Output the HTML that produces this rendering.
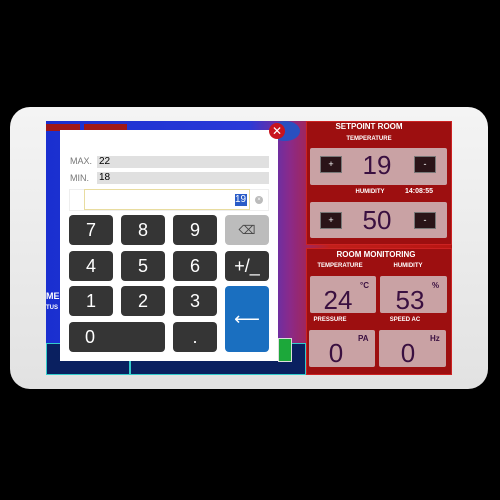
<!DOCTYPE html>
<html><head><style>
*{margin:0;padding:0;box-sizing:border-box}
body{width:500px;height:500px;background:#000;position:relative;overflow:hidden;font-family:"Liberation Sans",sans-serif}
.a{position:absolute}
.frame{left:10px;top:107px;width:478px;height:282px;background:linear-gradient(#f4f4f4,#e2e2e2);border-radius:20px}
.scr{left:46px;top:121px;width:406px;height:254px;background:linear-gradient(90deg,#1a2fd0 0%,#2a3ad8 50%,#8a2a8a 60%,#c0201a 70%,#b81512 100%);overflow:hidden}
.rp{background:#9d0f10;border:1px solid #c22}
.lbl{color:#fff;font-weight:bold;font-size:6px;text-align:center}
.box{background:#c9a2a4;border-radius:2px}
.big{color:#3a1040;font-size:26px;text-align:center}
.pm{width:22px;height:17px;background:#2a1418;border:1px solid #777;color:#fff;font-size:9px;text-align:center;line-height:15px}
.k{background:#353535;border-radius:4px;color:#fff;font-size:18px;text-align:center;line-height:30px}
.bar{background:#e0e0e0}
</style></head><body>
<div class="a frame"></div>
<div class="a scr">
 <div class="a" style="left:0;top:3px;width:34px;height:7px;background:#a01818"></div>
 <div class="a" style="left:38px;top:3px;width:43px;height:7px;background:#a01818"></div>
 <div class="a" style="left:0;top:170px;width:20px;height:30px;color:#fff;font-weight:bold;font-size:9px">ME<br><span style="font-size:6px">TUS</span></div>
 <div class="a" style="left:0;top:222px;width:84px;height:32px;background:#0a2060;border:1px solid #3cc"></div>
 <div class="a" style="left:84px;top:222px;width:176px;height:32px;background:#0a2060;border:1px solid #3cc"></div>
 <div class="a" style="left:232px;top:217px;width:14px;height:24px;background:#1ca83a;border:1px solid #ddd"></div>
 <div class="a" style="left:224px;top:0;width:30px;height:20px;border-radius:50%;background:#2a50c0"></div>
</div>
<div class="a rp" style="left:306px;top:121px;width:146px;height:124px"></div>
<div class="a rp" style="left:306px;top:248px;width:146px;height:127px"></div>
<div class="a lbl" style="left:306px;top:122px;width:126px;font-size:8px">SETPOINT ROOM</div>
<div class="a lbl" style="left:306px;top:136px;width:126px">TEMPERATURE</div>
<div class="a box" style="left:310px;top:148px;width:137px;height:37px"></div>
<div class="a pm" style="left:320px;top:156px">+</div>
<div class="a big" style="left:355px;top:150px;width:44px">19</div>
<div class="a pm" style="left:414px;top:156px">-</div>
<div class="a lbl" style="left:355px;top:189px;width:30px">HUMIDITY</div>
<div class="a lbl" style="left:399px;top:188px;width:40px;font-size:7px">14:08:55</div>
<div class="a box" style="left:310px;top:202px;width:137px;height:36px"></div>
<div class="a pm" style="left:320px;top:212px">+</div>
<div class="a big" style="left:355px;top:205px;width:44px">50</div>
<div class="a pm" style="left:414px;top:212px">-</div>
<div class="a lbl" style="left:306px;top:250px;width:140px;font-size:8px">ROOM MONITORING</div>
<div class="a lbl" style="left:312px;top:263px;width:56px">TEMPERATURE</div>
<div class="a lbl" style="left:380px;top:263px;width:56px">HUMIDITY</div>
<div class="a box" style="left:310px;top:276px;width:66px;height:37px"></div>
<div class="a box" style="left:380px;top:276px;width:67px;height:37px"></div>
<div class="a big" style="left:318px;top:285px;width:40px">24</div>
<div class="a" style="left:360px;top:281px;font-size:8px;color:#3a1040;font-weight:bold">°C</div>
<div class="a big" style="left:390px;top:285px;width:40px">53</div>
<div class="a" style="left:432px;top:281px;font-size:8px;color:#3a1040;font-weight:bold">%</div>
<div class="a lbl" style="left:310px;top:317px;width:40px">PRESSURE</div>
<div class="a lbl" style="left:380px;top:317px;width:50px">SPEED AC</div>
<div class="a box" style="left:309px;top:330px;width:66px;height:37px"></div>
<div class="a box" style="left:379px;top:330px;width:67px;height:37px"></div>
<div class="a big" style="left:316px;top:338px;width:40px">0</div>
<div class="a" style="left:358px;top:334px;font-size:8px;color:#3a1040;font-weight:bold">PA</div>
<div class="a big" style="left:388px;top:338px;width:40px">0</div>
<div class="a" style="left:430px;top:334px;font-size:8px;color:#3a1040;font-weight:bold">Hz</div>

<div class="a" style="left:60px;top:130px;width:218px;height:231px;background:#fff"></div>
<div class="a" style="left:269px;top:123px;width:16px;height:16px;border-radius:50%;background:#c8141e;color:#fff;font-size:12px;text-align:center;line-height:16px">✕</div>
<div class="a" style="left:70px;top:156px;font-size:9px;color:#777">MAX.</div>
<div class="a bar" style="left:97px;top:156px;width:172px;height:12px;font-size:10px;padding-left:2px;line-height:12px">22</div>
<div class="a" style="left:70px;top:173px;font-size:9px;color:#777">MIN.</div>
<div class="a bar" style="left:97px;top:172px;width:172px;height:12px;font-size:10px;padding-left:2px;line-height:12px">18</div>
<div class="a" style="left:69px;top:189px;width:200px;height:22px;border:1px solid #eee"></div>
<div class="a" style="left:84px;top:189px;width:166px;height:21px;border:1px solid #e8dca0"></div>
<div class="a" style="left:235px;top:194px;width:12px;height:12px;background:#2a5cc8;color:#fff;font-size:10px;line-height:12px">19</div>
<div class="a" style="left:255px;top:196px;width:8px;height:8px;border-radius:50%;background:#bbb;color:#fff;font-size:6px;text-align:center;line-height:8px">×</div>
<div class="a k" style="left:69px;top:215px;width:44px;height:30px">7</div>
<div class="a k" style="left:121px;top:215px;width:44px;height:30px">8</div>
<div class="a k" style="left:173px;top:215px;width:44px;height:30px">9</div>
<div class="a k" style="left:225px;top:215px;width:44px;height:30px;background:#bcbcbc;color:#444;font-size:12px">⌫</div>
<div class="a k" style="left:69px;top:251px;width:44px;height:30px">4</div>
<div class="a k" style="left:121px;top:251px;width:44px;height:30px">5</div>
<div class="a k" style="left:173px;top:251px;width:44px;height:30px">6</div>
<div class="a k" style="left:225px;top:251px;width:44px;height:30px">+/_</div>
<div class="a k" style="left:69px;top:286px;width:44px;height:30px">1</div>
<div class="a k" style="left:121px;top:286px;width:44px;height:30px">2</div>
<div class="a k" style="left:173px;top:286px;width:44px;height:30px">3</div>
<div class="a k" style="left:225px;top:286px;width:44px;height:66px;background:#1a6fc0;line-height:66px;font-size:18px">⟵</div>
<div class="a k" style="left:69px;top:322px;width:96px;height:30px;text-align:left;padding-left:16px">0</div>
<div class="a k" style="left:173px;top:322px;width:44px;height:30px">.</div>
</body></html>
